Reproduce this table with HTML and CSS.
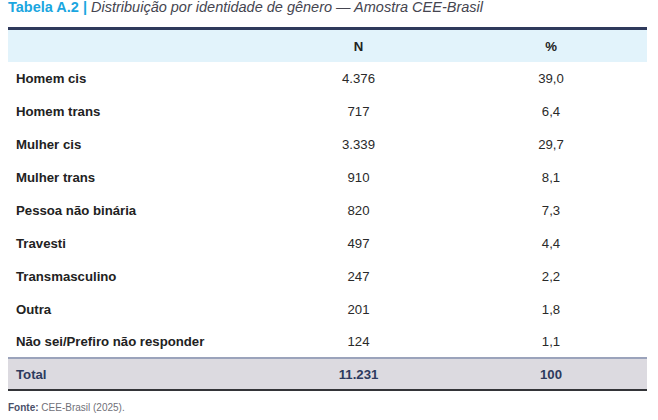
FILE: index.html
```html
<!DOCTYPE html>
<html lang="pt">
<head>
<meta charset="utf-8">
<link rel="stylesheet" href="styles.css">
</head>
<body>
<div class="wrap">
  <p class="title"><span class="label">Tabela A.2 |</span> <span class="desc">Distribuição por identidade de gênero — Amostra CEE-Brasil</span></p>
  <table class="tbl">
    <colgroup><col class="c1"><col class="c2"><col class="c3"></colgroup>
    <thead>
      <tr><th></th><th>N</th><th>%</th></tr>
    </thead>
    <tbody>
      <tr><td>Homem cis</td><td>4.376</td><td>39,0</td></tr>
      <tr><td>Homem trans</td><td>717</td><td>6,4</td></tr>
      <tr><td>Mulher cis</td><td>3.339</td><td>29,7</td></tr>
      <tr><td>Mulher trans</td><td>910</td><td>8,1</td></tr>
      <tr><td>Pessoa não binária</td><td>820</td><td>7,3</td></tr>
      <tr><td>Travesti</td><td>497</td><td>4,4</td></tr>
      <tr><td>Transmasculino</td><td>247</td><td>2,2</td></tr>
      <tr><td>Outra</td><td>201</td><td>1,8</td></tr>
      <tr><td>Não sei/Prefiro não responder</td><td>124</td><td>1,1</td></tr>
    </tbody>
    <tfoot>
      <tr><td>Total</td><td>11.231</td><td>100</td></tr>
    </tfoot>
  </table>
  <p class="source"><b>Fonte:</b> CEE-Brasil (2025).</p>
</div>
</body>
</html>
```
FILE: styles.css
```css
html, body {
  margin: 0;
  padding: 0;
  background: #ffffff;
}
body {
  font-family: "Liberation Sans", Arial, sans-serif;
  color: #222222;
}
.wrap {
  padding: 0 11px 0 8px;
}
.title {
  margin: 0;
  height: 28px;
  font-size: 14.5px;
  line-height: 16px;
  margin-top: -1px;
}
.label {
  color: #1aa6e0;
  font-weight: bold;
}
.desc {
  color: #454550;
  font-style: italic;
}
.tbl {
  width: 639px;
  border-collapse: collapse;
  table-layout: fixed;
  font-size: 13.2px;
  line-height: 15px;
}
.c1 { width: 254px; }
.c2 { width: 193px; }
.c3 { width: 192px; }
.tbl thead th {
  background: #e2f3fb;
  border-top: 3px solid #2f3a5c;
  height: 32px;
  padding: 0;
  font-weight: bold;
  text-align: center;
  color: #222;
}
.tbl tbody td {
  height: 32.9px;
  padding: 1px 0 0 0;
  box-sizing: border-box;
  text-align: center;
  color: #2a2a2a;
}
.tbl td:first-child {
  text-align: left;
  padding-left: 8px;
  font-weight: bold;
  color: #222;
}
.tbl tfoot td {
  background: #dcdae0;
  border-top: 2px solid #9ba3bb;
  border-bottom: 2px solid #333438;
  height: 30px;
  padding: 0;
  text-align: center;
  font-weight: bold;
  color: #2d3a5e;
}
.tbl tfoot td:first-child {
  color: #2d3a5e;
}
.source {
  margin: 11px 0 0 0;
  font-size: 10px;
  color: #707078;
}
.source b {
  color: #4a5068;
}
```
